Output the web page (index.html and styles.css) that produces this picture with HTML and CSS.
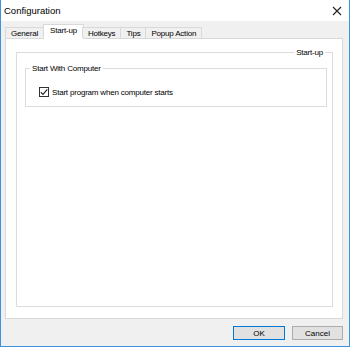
FILE: index.html
```html
<!DOCTYPE html>
<html lang="en">
<head>
    <meta charset="UTF-8">
    <title>Configuration</title>
    <link rel="stylesheet" href="styles.css">
</head>
<body>
    <div class="window">
        <div class="titlebar">
            <span class="title">Configuration</span>
            <svg class="close" width="10" height="10" viewBox="0 0 10 10">
                <path d="M1 1 L9 9 M9 1 L1 9" stroke="#222" stroke-width="1.1"/>
            </svg>
        </div>
        <div class="body">
            <div class="tabs">
                <div class="tab">General</div>
                <div class="tab active">Start-up</div>
                <div class="tab">Hotkeys</div>
                <div class="tab">Tips</div>
                <div class="tab">Popup Action</div>
            </div>
            <div class="panel">
                <fieldset class="group outer">
                    <legend class="legend-right">Start-up</legend>
                    <fieldset class="group inner">
                        <legend>Start With Computer</legend>
                        <label class="check-row">
                            <span class="checkbox">
                                <svg width="8" height="8" viewBox="0 0 8 8">
                                    <path d="M0.8 4.2 L3 6.4 L7.3 1.3" fill="none" stroke="#222" stroke-width="1.1"/>
                                </svg>
                            </span>
                            Start program when computer starts
                        </label>
                    </fieldset>
                </fieldset>
            </div>
            <div class="buttons">
                <button class="btn default">OK</button>
                <button class="btn">Cancel</button>
            </div>
        </div>
    </div>
</body>
</html>
```

FILE: styles.css
```css
body {
    margin: 0;
    padding: 0;
    font-family: "Liberation Sans", Arial, sans-serif;
    font-size: 8px;
    letter-spacing: -0.2px;
    color: #000000;
    background-color: #ffffff;
}

.window {
    width: 350px;
    height: 347px;
    box-sizing: border-box;
    border: 1px solid #3c93e0;
    border-top: none;
    display: flex;
    flex-direction: column;
}

.titlebar {
    height: 21px;
    background-color: #ffffff;
    display: flex;
    align-items: center;
    justify-content: space-between;
    padding: 0 6px 0 3px;
}

.title {
    font-size: 9.5px;
    letter-spacing: 0;
    margin-top: -1px;
}

.close {
    margin-right: 1px;
}

.body {
    flex: 1;
    background-color: #f0f0f0;
    padding: 3px 6px 6px 4px;
    display: flex;
    flex-direction: column;
}

.tabs {
    display: flex;
    align-items: flex-end;
    height: 14px;
    position: relative;
    z-index: 1;
}

.tab {
    height: 11px;
    line-height: 11px;
    padding: 0 5px;
    border: 1px solid #d9d9d9;
    border-bottom: none;
    margin-left: -1px;
    background-color: #f0f0f0;
    box-sizing: border-box;
}

.tab:first-child {
    margin-left: 0;
}

.tab.active {
    height: 15px;
    line-height: 12px;
    background-color: #ffffff;
    margin-bottom: -1px;
    padding: 0 6px;
    margin-right: -1px;
}

.panel {
    flex: 1;
    background-color: #ffffff;
    border: 1px solid #d9d9d9;
    padding: 9px 9px 11px 10px;
    display: flex;
}

.group {
    margin: 0;
    border: 1px solid #dcdcdc;
    padding: 0;
    min-width: 0;
}

.group legend {
    padding: 0 2px;
    margin-left: 4px;
}

.outer {
    flex: 1;
    padding: 7px 5px 0 8px;
}

.outer > .legend-right {
    margin-left: auto;
    margin-right: 2px;
}

.check-row {
    display: flex;
    align-items: center;
    gap: 3px;
    margin: 14px 0 9px 13px;
}

.checkbox {
    width: 10px;
    height: 10px;
    box-sizing: border-box;
    border: 1px solid #333333;
    background-color: #ffffff;
    display: flex;
    align-items: center;
    justify-content: center;
}

.buttons {
    display: flex;
    justify-content: flex-end;
    gap: 7px;
    margin-top: 7px;
}

.btn {
    width: 51px;
    height: 14px;
    padding: 0;
    font-family: inherit;
    font-size: 8px;
    background-color: #e1e1e1;
    border: 1px solid #adadad;
    line-height: 11px;
}

.btn.default {
    width: 52px;
    border-color: #0078d7;
}
```
